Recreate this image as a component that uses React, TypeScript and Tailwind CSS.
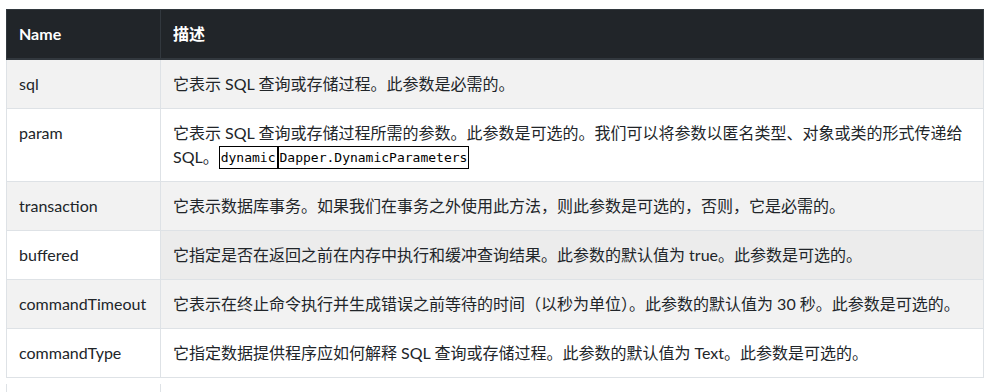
import React from "react";

const Code = ({ children }: { children: React.ReactNode }) => (
  <code className="font-['DejaVu_Sans_Mono',monospace] text-[13px] leading-[14px] text-black border border-black px-[1px] py-[3px] align-[1px]">
    {children}
  </code>
);

type Row = { name: string; desc: React.ReactNode; striped: boolean; hoverDesc?: boolean };

const rows: Row[] = [
  { name: "sql", desc: "它表示 SQL 查询或存储过程。此参数是必需的。", striped: true },
  {
    name: "param",
    desc: (
      <>
        它表示 SQL 查询或存储过程所需的参数。此参数是可选的。我们可以将参数以匿名类型、对象或类的形式传递给 SQL。
        <Code>dynamic</Code>
        <Code>Dapper.DynamicParameters</Code>
      </>
    ),
    striped: false,
  },
  {
    name: "transaction",
    desc: "它表示数据库事务。如果我们在事务之外使用此方法，则此参数是可选的，否则，它是必需的。",
    striped: true,
  },
  {
    name: "buffered",
    desc: "它指定是否在返回之前在内存中执行和缓冲查询结果。此参数的默认值为 true。此参数是可选的。",
    striped: false,
    hoverDesc: true,
  },
  {
    name: "commandTimeout",
    desc: "它表示在终止命令执行并生成错误之前等待的时间（以秒为单位）。此参数的默认值为 30 秒。此参数是可选的。",
    striped: true,
  },
  {
    name: "commandType",
    desc: "它指定数据提供程序应如何解释 SQL 查询或存储过程。此参数的默认值为 Text。此参数是可选的。",
    striped: false,
  },
];

export default function App() {
  return (
    <div className="bg-white w-[993px] h-[392px] overflow-hidden pl-[6px] pt-[9px] font-[Lato,'Noto_Sans_CJK_SC',sans-serif] text-[16px] leading-6 text-[#212529]">
      <table className="w-[978px] border-collapse">
        <thead>
          <tr>
            <th className="w-[154px] bg-[#212529] text-white font-bold text-left align-bottom px-3 py-3 border border-[#32383e] border-b-2">
              Name
            </th>
            <th className="bg-[#212529] text-white font-bold text-left align-bottom px-3 py-3 border border-[#32383e] border-b-2">
              描述
            </th>
          </tr>
        </thead>
        <tbody>
          {rows.map((r) => (
            <tr key={r.name} className={r.striped ? "bg-[#f2f2f2]" : "bg-white"}>
              <td className="align-top px-3 py-3 border border-[#dee2e6]">
                <div className="h-6">{r.name}</div>
              </td>
              <td
                className={
                  "align-top px-3 py-3 border border-[#dee2e6] " + (r.hoverDesc ? "bg-[#ececec]" : "")
                }
              >
                {r.desc}
              </td>
            </tr>
          ))}
        </tbody>
      </table>
      <div className="mt-[6px] w-[978px] h-[20px] flex border-l border-[#dee2e6]">
        <div className="w-[154px] border-r border-[#dee2e6]" />
      </div>
    </div>
  );
}
